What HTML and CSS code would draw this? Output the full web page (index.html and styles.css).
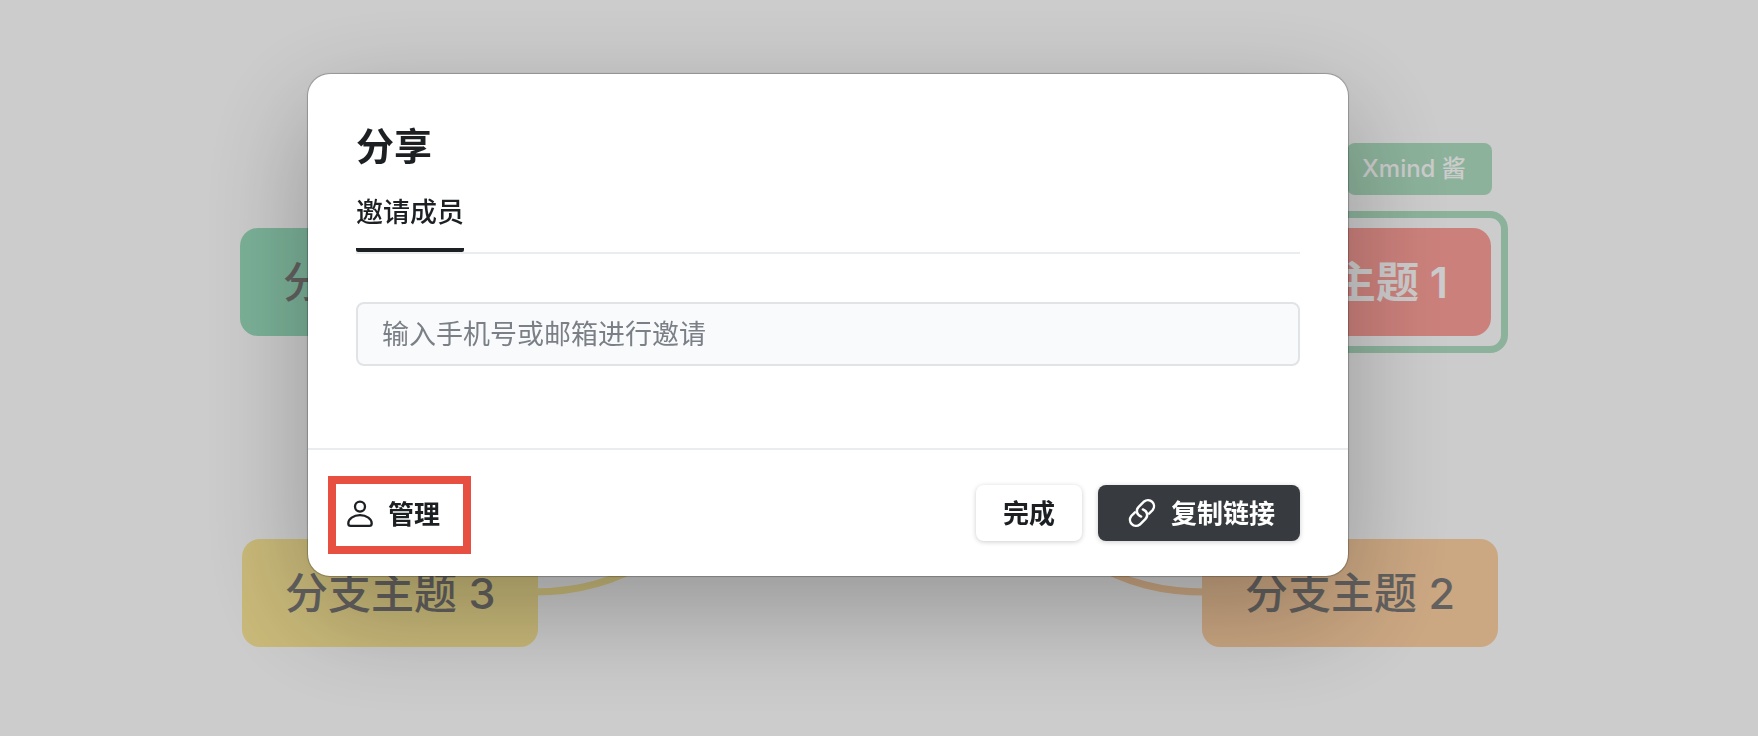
FILE: index.html
```html
<!DOCTYPE html>
<html lang="zh-CN">
<head>
    <meta charset="UTF-8">
    <meta name="viewport" content="width=device-width, initial-scale=1.0">
    <title>分享</title>
    <link rel="stylesheet" href="styles.css">
</head>
<body>
    <!-- Mind map canvas -->
    <main class="canvas">
        <svg class="links" width="1758" height="736" viewBox="0 0 1758 736" fill="none" stroke-width="7" aria-hidden="true">
            <path stroke="#fbe898" d="M534 592C574 592 612 584 650 560" />
            <path stroke="#fed1a3" d="M1206 592C1164 592 1126 584 1088 560" />
        </svg>
        <div class="node node-green">分支主题 4</div>
        <div class="node node-yellow">分支主题 3</div>
        <div class="node node-orange">分支主题 2</div>
        <div class="selection">
            <div class="node-red">分支主题 1</div>
        </div>
        <div class="user-tag">Xmind 酱</div>
    </main>

    <!-- Share dialog -->
    <div class="overlay">
        <div class="modal" role="dialog" aria-modal="true" aria-labelledby="shareTitle">
            <div class="modal-body">
                <h1 id="shareTitle">分享</h1>
                <div class="tabs" role="tablist">
                    <button class="tab active" type="button" role="tab" aria-selected="true">邀请成员</button>
                </div>
                <input class="invite-input" type="text" aria-label="邀请成员" placeholder="输入手机号或邮箱进行邀请">
            </div>
            <div class="modal-footer">
                <button class="btn-manage" type="button">
                    <svg width="28" height="28" viewBox="0 0 28 28" fill="none" stroke="currentColor" stroke-width="2.3" aria-hidden="true">
                        <circle cx="14" cy="6.6" r="5" />
                        <path d="M14 15.2c-6.600 0-11.700 3.900-11.700 8.200 0 1.700.8 2.400 2.400 2.400h18.600c1.600 0 2.400-.7 2.400-2.400 0-4.300-5.100-8.200-11.700-8.200z" />
                    </svg>
                    <span>管理</span>
                </button>
                <div class="actions">
                    <button class="btn btn-done" type="button"><span>完成</span></button>
                    <button class="btn btn-copy" type="button">
                        <svg width="30" height="30" viewBox="0 0 28 28" fill="none" stroke="currentColor" stroke-width="2.3" stroke-linecap="round" aria-hidden="true">
                            <path d="M20.600 14.600L24 11.200A5.700 5.700 0 0 0 16 3.200L10.900 8.300C8 11.200 8.800 15.600 13.200 17.300" />
                            <path d="M7.400 13.400L4 16.800A5.700 5.700 0 0 0 12 24.800L17.100 19.700C20 16.800 19.200 12.400 14.800 10.700" />
                        </svg>
                        <span>复制链接</span>
                    </button>
                </div>
            </div>
        </div>
    </div>
</body>
</html>
```
FILE: styles.css
```css
* {
    box-sizing: border-box;
}
body {
    margin: 0;
    min-height: 100vh;
    overflow: hidden;
    background: #fff;
    color: #1d2023;
    font-family: "Noto Sans CJK SC", sans-serif;
}
button, input {
    font-family: inherit;
    color: inherit;
}
button {
    border: none;
    background: none;
    cursor: pointer;
}

/* Canvas */
.canvas {
    position: absolute;
    inset: 0;
    overflow: hidden;
}
.links {
    position: absolute;
    left: 0;
    top: 0;
}
.node, .node-red {
    padding: 0 43px;
    border-radius: 18px;
    font-family: Inter, "Noto Sans CJK SC", sans-serif;
    font-size: 43px;
    font-weight: 500;
    line-height: 108px;
    white-space: nowrap;
    color: #7c7a78;
}
.node {
    position: absolute;
}
.node-green {
    left: 240px;
    top: 228px;
    background: #9adebe;
}
.node-yellow {
    left: 242px;
    top: 539px;
    background: #fbe898;
}
.node-orange {
    left: 1202px;
    top: 539px;
    background: #fed1a3;
}
.selection {
    position: absolute;
    left: 1187px;
    top: 211px;
    padding: 10px;
    border: 7px solid #afdfc2;
    border-radius: 18px;
}
.node-red {
    background: #ffa19b;
    color: #fff;
    font-weight: 600;
}
.user-tag {
    position: absolute;
    left: 1347px;
    top: 143px;
    width: 145px;
    padding-left: 15px;
    border-radius: 8px;
    background: #afdfc2;
    color: #fff;
    font-family: Inter, "Noto Sans CJK SC", sans-serif;
    font-size: 24px;
    font-weight: 500;
    line-height: 52px;
    white-space: nowrap;
}

/* Dialog */
.overlay {
    position: fixed;
    inset: 0;
    display: flex;
    justify-content: center;
    align-items: flex-start;
    padding: 74px 102px 0 0;
    background: rgba(0, 0, 0, 0.2);
}
.modal {
    width: 100%;
    max-width: 1040px;
    border-radius: 22px;
    background: #fff;
    box-shadow: 0 0 1px 1px rgba(0, 0, 0, 0.25), 0 36px 110px rgba(0, 0, 0, 0.28);
}
.modal-body {
    padding: 46px 48px 82px;
}
h1 {
    margin: 0;
    font-size: 38px;
    font-weight: 600;
    line-height: 48px;
}
.tabs {
    display: flex;
    margin: 18px 0 48px;
    border-bottom: 2px solid #e9edee;
}
.tab {
    padding: 7px 0 19px;
    border-bottom: 4px solid #1d2023;
    border-radius: 2px;
    font-size: 27px;
    font-weight: 500;
    line-height: 36px;
}
.invite-input {
    display: block;
    width: 100%;
    height: 64px;
    padding: 0 24px 4px;
    border: 2px solid #e1e4e7;
    border-radius: 8px;
    background: #f9fafc;
    font-size: 27px;
}
.invite-input::placeholder {
    color: #7b7f86;
    opacity: 1;
}
.modal-footer {
    display: flex;
    justify-content: space-between;
    align-items: center;
    padding: 26px 48px 22px 20px;
    border-top: 2px solid #e9edee;
}
.btn-manage {
    display: flex;
    align-items: center;
    gap: 14px;
    height: 78px;
    padding: 0 23px 3px 10px;
    border: 8px solid #e74f41;
    font-size: 26px;
    font-weight: 600;
}
.btn-manage span, .btn span {
    padding-bottom: 3px;
}
.actions {
    display: flex;
    gap: 16px;
    padding-bottom: 4px;
}
.btn {
    display: flex;
    align-items: center;
    gap: 14px;
    height: 56px;
    padding: 0 27px;
    border-radius: 8px;
    font-size: 26px;
    font-weight: 600;
    box-shadow: 0 1px 5px rgba(0, 0, 0, 0.2);
}
.btn-copy {
    padding: 0 25px 0 29px;
    background: #373b3f;
    color: #fff;
}
```
